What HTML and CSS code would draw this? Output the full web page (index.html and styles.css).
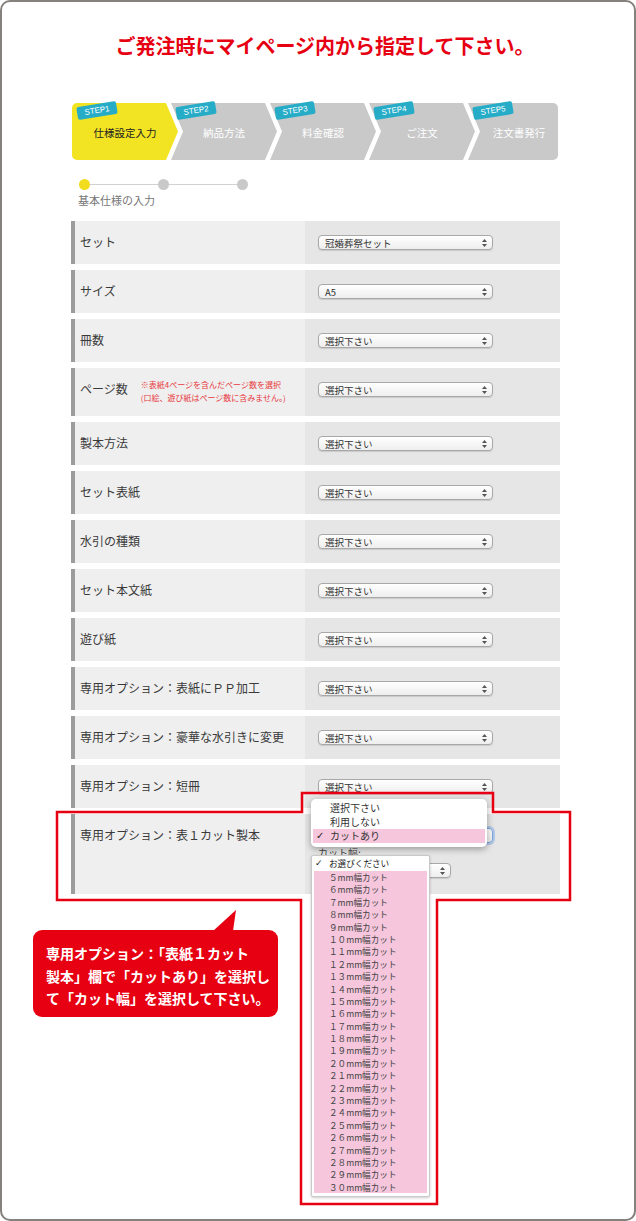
FILE: index.html
```html
<!DOCTYPE html>
<html lang="ja">
<head>
    <meta charset="UTF-8">
    <title>仕様設定入力</title>
    <link rel="stylesheet" href="styles.css">
</head>
<body>
    <div class="frame">
        <h1 class="title">ご発注時にマイページ内から指定して下さい。</h1>

        <div class="steps">
            <div class="step current">
                <div class="step-bg"></div>
                <span class="step-tag">STEP1</span>
                <div class="step-name">仕様設定入力</div>
            </div>
            <div class="step">
                <div class="step-bg"></div>
                <span class="step-tag">STEP2</span>
                <div class="step-name">納品方法</div>
            </div>
            <div class="step">
                <div class="step-bg"></div>
                <span class="step-tag">STEP3</span>
                <div class="step-name">料金確認</div>
            </div>
            <div class="step">
                <div class="step-bg"></div>
                <span class="step-tag">STEP4</span>
                <div class="step-name">ご注文</div>
            </div>
            <div class="step">
                <div class="step-bg"></div>
                <span class="step-tag">STEP5</span>
                <div class="step-name">注文書発行</div>
            </div>
        </div>

        <div class="progress">
            <span class="dot on"></span>
            <span class="dot"></span>
            <span class="dot"></span>
        </div>
        <div class="progress-label">基本仕様の入力</div>

        <div class="spec-list">
            <div class="row">
                <div class="row-label">セット</div>
                <div class="row-field"><div class="select"><span>冠婚葬祭セット</span><svg class="arrows" width="5" height="8" viewBox="0 0 5 8"><path d="M2.5 0L5 3H0z M2.5 8L0 5h5z"/></svg></div></div>
            </div>
            <div class="row">
                <div class="row-label">サイズ</div>
                <div class="row-field"><div class="select"><span>A5</span><svg class="arrows" width="5" height="8" viewBox="0 0 5 8"><path d="M2.5 0L5 3H0z M2.5 8L0 5h5z"/></svg></div></div>
            </div>
            <div class="row">
                <div class="row-label">冊数</div>
                <div class="row-field"><div class="select"><span>選択下さい</span><svg class="arrows" width="5" height="8" viewBox="0 0 5 8"><path d="M2.5 0L5 3H0z M2.5 8L0 5h5z"/></svg></div></div>
            </div>
            <div class="row tall">
                <div class="row-label">
                    <span>ページ数</span>
                    <span class="note">※表紙4ページを含んだページ数を選択<br>(口絵、遊び紙はページ数に含みません。)</span>
                </div>
                <div class="row-field"><div class="select"><span>選択下さい</span><svg class="arrows" width="5" height="8" viewBox="0 0 5 8"><path d="M2.5 0L5 3H0z M2.5 8L0 5h5z"/></svg></div></div>
            </div>
            <div class="row">
                <div class="row-label">製本方法</div>
                <div class="row-field"><div class="select"><span>選択下さい</span><svg class="arrows" width="5" height="8" viewBox="0 0 5 8"><path d="M2.5 0L5 3H0z M2.5 8L0 5h5z"/></svg></div></div>
            </div>
            <div class="row">
                <div class="row-label">セット表紙</div>
                <div class="row-field"><div class="select"><span>選択下さい</span><svg class="arrows" width="5" height="8" viewBox="0 0 5 8"><path d="M2.5 0L5 3H0z M2.5 8L0 5h5z"/></svg></div></div>
            </div>
            <div class="row">
                <div class="row-label">水引の種類</div>
                <div class="row-field"><div class="select"><span>選択下さい</span><svg class="arrows" width="5" height="8" viewBox="0 0 5 8"><path d="M2.5 0L5 3H0z M2.5 8L0 5h5z"/></svg></div></div>
            </div>
            <div class="row">
                <div class="row-label">セット本文紙</div>
                <div class="row-field"><div class="select"><span>選択下さい</span><svg class="arrows" width="5" height="8" viewBox="0 0 5 8"><path d="M2.5 0L5 3H0z M2.5 8L0 5h5z"/></svg></div></div>
            </div>
            <div class="row">
                <div class="row-label">遊び紙</div>
                <div class="row-field"><div class="select"><span>選択下さい</span><svg class="arrows" width="5" height="8" viewBox="0 0 5 8"><path d="M2.5 0L5 3H0z M2.5 8L0 5h5z"/></svg></div></div>
            </div>
            <div class="row">
                <div class="row-label">専用オプション：表紙にＰＰ加工</div>
                <div class="row-field"><div class="select"><span>選択下さい</span><svg class="arrows" width="5" height="8" viewBox="0 0 5 8"><path d="M2.5 0L5 3H0z M2.5 8L0 5h5z"/></svg></div></div>
            </div>
            <div class="row">
                <div class="row-label">専用オプション：豪華な水引きに変更</div>
                <div class="row-field"><div class="select"><span>選択下さい</span><svg class="arrows" width="5" height="8" viewBox="0 0 5 8"><path d="M2.5 0L5 3H0z M2.5 8L0 5h5z"/></svg></div></div>
            </div>
            <div class="row">
                <div class="row-label">専用オプション：短冊</div>
                <div class="row-field"><div class="select"><span>選択下さい</span><svg class="arrows" width="5" height="8" viewBox="0 0 5 8"><path d="M2.5 0L5 3H0z M2.5 8L0 5h5z"/></svg></div></div>
            </div>
            <div class="row cut">
                <div class="row-label">専用オプション：表１カット製本</div>
                <div class="row-field">
                    <div class="select focused"><span>カットあり</span><svg class="arrows" width="5" height="8" viewBox="0 0 5 8"><path d="M2.5 0L5 3H0z M2.5 8L0 5h5z"/></svg></div>
                    <div class="cut-label">カット幅:</div>
                    <div class="select small"><span>お選びください</span><svg class="arrows" width="5" height="8" viewBox="0 0 5 8"><path d="M2.5 0L5 3H0z M2.5 8L0 5h5z"/></svg></div>
                </div>
            </div>
        </div>
    </div>

    <!-- open dropdowns -->
    <div class="menu cut-menu">
        <div class="menu-item">選択下さい</div>
        <div class="menu-item">利用しない</div>
        <div class="menu-item picked"><span class="check">✓</span>カットあり</div>
    </div>

    <div class="menu width-menu">
        <div class="list-item first"><span class="check">✓</span>お選びください</div>
        <div class="list-item">５mm幅カット</div>
        <div class="list-item">６mm幅カット</div>
        <div class="list-item">７mm幅カット</div>
        <div class="list-item">８mm幅カット</div>
        <div class="list-item">９mm幅カット</div>
        <div class="list-item">１０mm幅カット</div>
        <div class="list-item">１１mm幅カット</div>
        <div class="list-item">１２mm幅カット</div>
        <div class="list-item">１３mm幅カット</div>
        <div class="list-item">１４mm幅カット</div>
        <div class="list-item">１５mm幅カット</div>
        <div class="list-item">１６mm幅カット</div>
        <div class="list-item">１７mm幅カット</div>
        <div class="list-item">１８mm幅カット</div>
        <div class="list-item">１９mm幅カット</div>
        <div class="list-item">２０mm幅カット</div>
        <div class="list-item">２１mm幅カット</div>
        <div class="list-item">２２mm幅カット</div>
        <div class="list-item">２３mm幅カット</div>
        <div class="list-item">２４mm幅カット</div>
        <div class="list-item">２５mm幅カット</div>
        <div class="list-item">２６mm幅カット</div>
        <div class="list-item">２７mm幅カット</div>
        <div class="list-item">２８mm幅カット</div>
        <div class="list-item">２９mm幅カット</div>
        <div class="list-item">３０mm幅カット</div>
    </div>

    <div class="callout">
        専用オプション：「表紙１カット<br>製本」欄で「カットあり」を選択し<br>て「カット幅」を選択して下さい。
    </div>

    <svg class="outline" width="636" height="1221" viewBox="0 0 636 1221">
        <polygon points="302,793 493,793 493,812 570,812 570,900 437,900 437,1204 301,1204 301,900 57,900 57,812 302,812"/>
    </svg>
</body>
</html>
```

FILE: styles.css
```css
body {
    margin: 0;
    width: 636px;
    height: 1221px;
    position: relative;
    overflow: hidden;
    background: #fff;
    font-family: "Noto Sans CJK JP", "Noto Sans", sans-serif;
    color: #3a3a3a;
}
.frame {
    box-sizing: border-box;
    height: 1221px;
    border: 2px solid #85817d;
    border-radius: 10px;
    padding: 32px 0 0 69px;
}
.title {
    margin: 0 0 0 -69px;
    padding-left: 14px;
    text-align: center;
    font-size: 20px;
    line-height: 24px;
    font-weight: bold;
    color: #e60012;
}

/* step bar */
.steps {
    display: flex;
    width: 486px;
    height: 57px;
    margin: 45px 0 0 1px;
}
.step {
    position: relative;
    flex: none;
    width: 106px;
    box-sizing: border-box;
    margin-left: -7px;
    padding: 22px 12px 0 12px;
}
.step:first-child {
    margin-left: 0;
}
.step:last-child {
    flex: 1;
    width: auto;
    padding-right: 0;
}
.step-bg {
    position: absolute;
    inset: 0;
    background: #c9c9c9;
    clip-path: polygon(0 0, calc(100% - 12px) 0, 100% 50%, calc(100% - 12px) 100%, 0 100%, 12px 50%);
}
.step:first-child .step-bg {
    background: #f2e422;
    border-radius: 5px 0 0 5px;
    clip-path: polygon(0 0, calc(100% - 12px) 0, 100% 50%, calc(100% - 12px) 100%, 0 100%);
}
.step:last-child .step-bg {
    border-radius: 0 5px 5px 0;
    clip-path: polygon(0 0, 100% 0, 100% 100%, 0 100%, 12px 50%);
}
.step-name {
    position: relative;
    text-align: center;
    font-size: 10.5px;
    line-height: 16px;
    color: #fff;
}
.step.current .step-name {
    color: #222;
}
.step-tag {
    position: absolute;
    top: 1px;
    left: 5px;
    width: 40px;
    height: 13px;
    border-radius: 2px;
    background: #27acc8;
    color: #fff;
    font: 8px/13px "Liberation Sans", sans-serif;
    text-align: center;
    transform: rotate(-9deg);
}

/* progress dots */
.progress {
    display: flex;
    justify-content: space-between;
    width: 169px;
    margin: 19px 0 0 8px;
    background: linear-gradient(#d2d2d2, #d2d2d2) center / 100% 1px no-repeat;
}
.dot {
    width: 11px;
    height: 11px;
    border-radius: 50%;
    background: #c9c9c9;
}
.dot.on {
    background: #f2dc1e;
}
.progress-label {
    margin: 3px 0 0 7px;
    font-size: 11px;
    line-height: 14px;
    color: #777;
}

/* spec rows */
.spec-list {
    display: flex;
    flex-direction: column;
    gap: 6px;
    width: 489px;
    margin-top: 14px;
}
.row {
    display: grid;
    grid-template-columns: 234px 1fr;
    height: 43px;
}
.row.tall {
    height: 48px;
}
.row.cut {
    height: 80px;
}
.row-label {
    display: flex;
    align-items: flex-start;
    background: #efefef;
    border-left: 4px solid #9c9c9c;
    padding: 13px 0 0 5px;
    font-size: 12px;
    line-height: 16px;
    color: #3a3a3a;
    white-space: nowrap;
}
.note {
    margin: -3px 0 0 13px;
    font-size: 8px;
    line-height: 13px;
    color: #e8383d;
}
.row-field {
    background: #e6e6e6;
    padding: 14px 0 0 13px;
}
.select {
    display: flex;
    align-items: center;
    justify-content: space-between;
    width: 175px;
    height: 15px;
    box-sizing: border-box;
    padding: 0 5px 0 6px;
    border: 1px solid #a8a8a8;
    border-radius: 4px;
    background: linear-gradient(#fff, #eeeeee);
    box-shadow: 0 1px 1px rgba(0, 0, 0, 0.12);
    font-size: 9.5px;
    color: #333;
    white-space: nowrap;
}
.select.focused {
    border-color: #7ba6dc;
    box-shadow: 0 0 0 2px rgba(110, 160, 230, 0.45);
}
.select.small {
    width: 133px;
    margin-top: 4px;
}
.arrows {
    fill: #555;
    flex: none;
}
.cut-label {
    margin-top: 4px;
    font-size: 10px;
    line-height: 12px;
    color: #444;
}

/* open dropdowns */
.menu {
    position: absolute;
    box-sizing: border-box;
    background: #fff;
    color: #333;
}
.cut-menu {
    left: 311px;
    top: 799px;
    width: 176px;
    height: 48px;
    padding: 2px 2px;
    border-radius: 5px;
    box-shadow: 0 2px 7px rgba(0, 0, 0, 0.35);
}
.menu-item {
    position: relative;
    height: 14px;
    padding-left: 17px;
    font-size: 10px;
    line-height: 14px;
}
.menu-item.picked {
    background: #f5c6dc;
}
.check {
    position: absolute;
    left: 3px;
    top: 0;
    font-family: "DejaVu Sans", sans-serif;
    font-size: 10px;
    font-weight: bold;
    color: #222;
}
.width-menu {
    left: 311px;
    top: 855px;
    width: 119px;
    height: 342px;
    padding: 0 2px;
    border: 1px solid #c9c9c9;
    border-radius: 2px;
    box-shadow: 0 1px 3px rgba(0, 0, 0, 0.2);
}
.list-item {
    position: relative;
    height: 12.4px;
    padding-left: 15px;
    background: #f5c6dc;
    font-size: 8.6px;
    line-height: 12.4px;
    color: #444;
    white-space: nowrap;
}
.list-item.first {
    height: 15px;
    line-height: 15px;
    background: #fff;
    color: #222;
}
.list-item .check {
    left: 1px;
    font-size: 9px;
}

/* callout */
.callout {
    position: absolute;
    left: 33px;
    top: 930px;
    width: 245px;
    height: 87px;
    box-sizing: border-box;
    padding: 12px 0 0 13px;
    border-radius: 9px;
    background: #e60012;
    color: #fff;
    font-size: 14px;
    font-weight: bold;
    line-height: 22.5px;
    white-space: nowrap;
}
.callout::before {
    content: "";
    position: absolute;
    left: 180px;
    top: -20px;
    width: 23px;
    height: 21px;
    background: #e60012;
    clip-path: polygon(0 100%, 87% 100%, 100% 0);
}

.outline {
    position: absolute;
    left: 0;
    top: 0;
    pointer-events: none;
}
.outline polygon {
    fill: none;
    stroke: #e60012;
    stroke-width: 2.5;
}
```
